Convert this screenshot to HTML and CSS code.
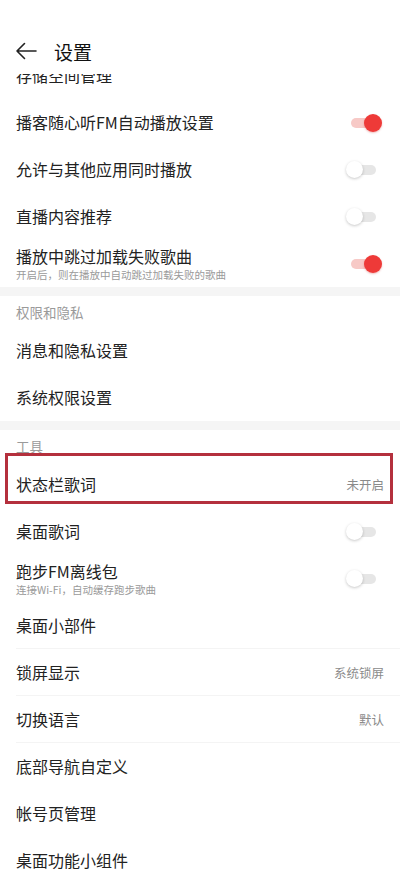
FILE: index.html
```html
<!DOCTYPE html>
<html lang="zh-CN">
<head>
    <meta charset="UTF-8">
    <title>设置</title>
    <link rel="stylesheet" href="styles.css">
</head>
<body>
   <main class="screen">
      <header class="head">
        <svg class="back" width="22" height="18" viewBox="0 0 22 18">
          <path d="M21 9H2M9.5 1.5L2 9l7.5 7.5" fill="none" stroke="#222" stroke-width="1.6" stroke-linecap="round" stroke-linejoin="round"/>
        </svg>
        <h1>设置</h1>
      </header>

      <div class="scroll">
        <div class="list">
          <div class="row cut"><span class="label">存储空间管理</span></div>
          <div class="row">
            <span class="label">播客随心听FM自动播放设置</span>
            <span class="switch on"><i></i><b></b></span>
          </div>
          <div class="row">
            <span class="label">允许与其他应用同时播放</span>
            <span class="switch"><i></i><b></b></span>
          </div>
          <div class="row">
            <span class="label">直播内容推荐</span>
            <span class="switch"><i></i><b></b></span>
          </div>
          <div class="row">
            <div class="texts">
              <span class="label">播放中跳过加载失败歌曲</span>
              <span class="sub">开启后，则在播放中自动跳过加载失败的歌曲</span>
            </div>
            <span class="switch on"><i></i><b></b></span>
          </div>
        </div>

        <div class="band"></div>
        <div class="list">
          <div class="section">权限和隐私</div>
          <div class="row"><span class="label">消息和隐私设置</span></div>
          <div class="row"><span class="label">系统权限设置</span></div>
        </div>

        <div class="band"></div>
        <div class="list">
          <div class="section">工具</div>
          <div class="row marked">
            <span class="label">状态栏歌词</span>
            <span class="value">未开启</span>
          </div>
          <div class="row">
            <span class="label">桌面歌词</span>
            <span class="switch"><i></i><b></b></span>
          </div>
          <div class="row">
            <div class="texts">
              <span class="label">跑步FM离线包</span>
              <span class="sub">连接Wi-Fi，自动缓存跑步歌曲</span>
            </div>
            <span class="switch"><i></i><b></b></span>
          </div>
          <div class="row line"><span class="label">桌面小部件</span></div>
          <div class="row line">
            <span class="label">锁屏显示</span>
            <span class="value">系统锁屏</span>
          </div>
          <div class="row line">
            <span class="label">切换语言</span>
            <span class="value">默认</span>
          </div>
          <div class="row"><span class="label">底部导航自定义</span></div>
          <div class="row"><span class="label">帐号页管理</span></div>
          <div class="row"><span class="label">桌面功能小组件</span></div>
        </div>
      </div>
   </main>
</body>
</html>
```

FILE: styles.css
```css
*{
  box-sizing: border-box;
}
body{
  margin: 0;
  background: #fff;
  font-family: "Noto Sans CJK SC", "Noto Sans", sans-serif;
  color: #222;
}
.screen{
  width: 400px;
  height: 888px;
  display: flex;
  flex-direction: column;
  overflow: hidden;
}

/* entete */
.head{
  position: relative;
  z-index: 1;
  height: 74px;
  flex-shrink: 0;
  display: flex;
  align-items: center;
  padding: 28px 0 0 15px;
  background: #fff;
}
.back{
  display: block;
}
.head h1{
  margin: 0 0 0 17px;
  font-size: 19px;
  font-weight: 400;
  color: #111;
}

/* liste */
.scroll{
  flex: 1;
  overflow: hidden;
}
.list{
  background: #fff;
}
.list:first-child{
  margin-top: -22px;
}
.row{
  position: relative;
  height: 47px;
  display: flex;
  align-items: center;
  justify-content: space-between;
  padding: 0 16px;
}
.row.line::after{
  content: "";
  position: absolute;
  left: 16px;
  right: 0;
  bottom: 0;
  height: 1px;
  background: #f4f4f4;
}
.label{
  font-size: 16px;
  line-height: 19px;
}
.texts{
  display: flex;
  flex-direction: column;
  gap: 2px;
  padding-top: 1px;
}
.sub{
  font-size: 10.5px;
  line-height: 13px;
  color: #9a9a9a;
}
.value{
  font-size: 12.5px;
  color: #8a8a8a;
}
.section{
  height: 31px;
  padding: 8px 16px 0;
  font-size: 13.5px;
  line-height: 16px;
  color: #9a9a9a;
}
.band{
  height: 9px;
  background: #f5f5f5;
}

/* interrupteur */
.switch{
  position: relative;
  width: 36px;
  height: 18px;
  margin-right: 2px;
}
.switch i{
  position: absolute;
  left: 5px;
  right: 6px;
  top: 4px;
  height: 10px;
  border-radius: 5px;
  background: #e6e6e6;
}
.switch b{
  position: absolute;
  left: 0;
  top: 0;
  width: 17px;
  height: 17px;
  border-radius: 50%;
  background: #fff;
  box-shadow: 0 1px 3px rgba(0,0,0,0.22);
}
.switch.on i{
  background: #f7c9c6;
}
.switch.on b{
  left: auto;
  right: 0;
  top: 0;
  width: 18px;
  height: 18px;
  background: #ee3a38;
  box-shadow: 0 1px 2px rgba(200,30,30,0.3);
}

/* cadre rouge */
.row.marked::before{
  content: "";
  position: absolute;
  left: 5px;
  right: 7px;
  top: -8px;
  bottom: 4px;
  border: 3.5px solid #b4303d;
}
```
